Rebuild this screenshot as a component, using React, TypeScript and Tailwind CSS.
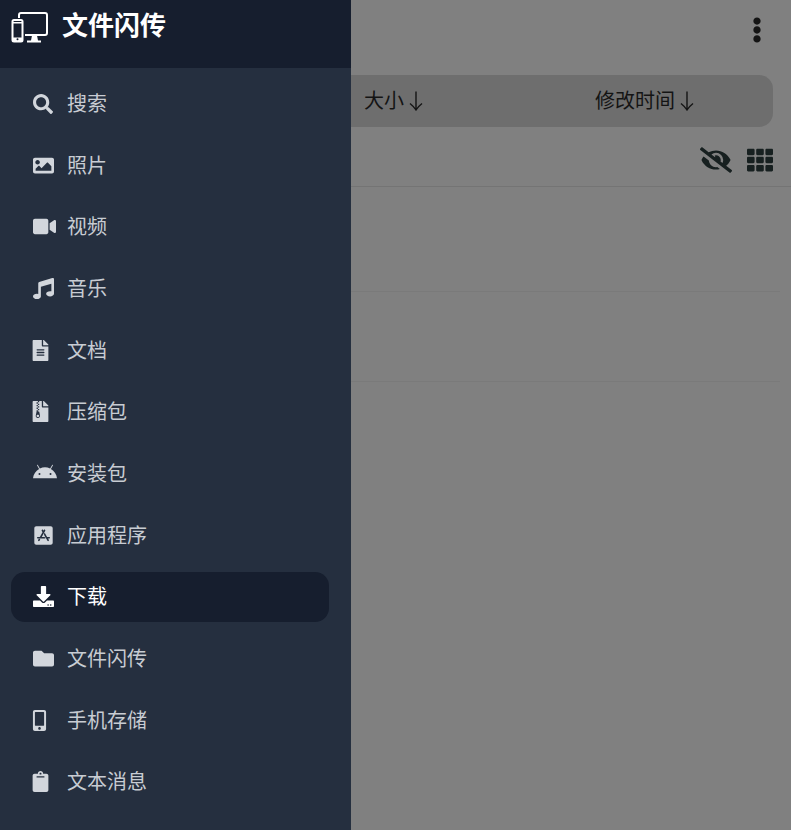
import React from "react";
import {
  FaSearch,
  FaImage,
  FaVideo,
  FaMusic,
  FaFileAlt,
  FaFileArchive,
  FaDownload,
  FaFolder,
  FaMobileAlt,
  FaClipboard,
  FaEllipsisV,
  FaEyeSlash,
  FaTh,
  FaAppStoreIos,
} from "react-icons/fa";
import { FaAndroid } from "react-icons/fa6";

const items: { label: string; icon: React.ReactNode; active?: boolean }[] = [
  { label: "搜索", icon: <FaSearch size={20} /> },
  { label: "照片", icon: <FaImage size={21} /> },
  { label: "视频", icon: <FaVideo size={23} /> },
  { label: "音乐", icon: <FaMusic size={21} /> },
  { label: "文档", icon: <FaFileAlt size={21} className="-ml-[2.6px]" /> },
  { label: "压缩包", icon: <FaFileArchive size={21} className="-ml-[2.6px]" /> },
  { label: "安装包", icon: <FaAndroid size={24} /> },
  { label: "应用程序", icon: <FaAppStoreIos size={21} /> },
  { label: "下载", icon: <FaDownload size={21} />, active: true },
  { label: "文件闪传", icon: <FaFolder size={21} /> },
  { label: "手机存储", icon: <FaMobileAlt size={21} className="-ml-[4px]" /> },
  { label: "文本消息", icon: <FaClipboard size={21} className="-ml-[2.6px]" /> },
];

function DevicesIcon() {
  return (
    <svg width="38" height="31" viewBox="0 0 38 31" fill="none">
      <path d="M8 6V3a2 2 0 0 1 2-2h24a2 2 0 0 1 2 2v18a2 2 0 0 1-2 2H14" stroke="#fff" strokeWidth="2" />
      <rect x="1.5" y="8" width="10" height="21.5" rx="1.5" stroke="#fff" strokeWidth="2" fill="#161e2e" />
      <rect x="1" y="10" width="11" height="1.5" fill="#fff" />
      <rect x="1" y="25.5" width="11" height="3.5" fill="#fff" />
      <circle cx="6.5" cy="27.3" r="1" fill="#161e2e" />
      <path d="M16 28.5h4l1-5h5l1 5h3V30.5H16z" fill="#fff" />
    </svg>
  );
}

function ArrowDown() {
  return (
    <svg width="14" height="20" viewBox="0 0 14 20" fill="none" className="ml-[5px] mt-[2px]">
      <path d="M7 0.5V19M1 12.5C3.5 14.5 5.5 16.5 7 19C8.5 16.5 10.5 14.5 13 12.5" stroke="#141414" strokeWidth="1.4" />
    </svg>
  );
}

function Sort({ label, className }: { label: string; className?: string }) {
  return (
    <span className={`-mt-[2px] flex items-center ${className ?? ""}`}>
      {label}
      <ArrowDown />
    </span>
  );
}

export default function App() {
  return (
    <div
      className="flex h-[830px] w-[791px] overflow-hidden bg-[#808080]"
      style={{ fontFamily: '"Noto Sans CJK SC", sans-serif' }}
    >
      <aside className="flex w-[351px] shrink-0 flex-col bg-[#252f3f]">
        <header className="flex h-[68px] items-start gap-[14px] bg-[#161e2e] pl-[11px] pt-[12px]">
          <DevicesIcon />
          <h1 className="-ml-[1px] -mt-[3px] text-[26px] leading-[30px] font-bold text-white">文件闪传</h1>
        </header>
        <nav className="flex flex-col gap-[11.67px] pl-[11px] pr-[22px] pt-[10.5px]">
          {items.map((it) => (
            <a
              key={it.label}
              className={`flex h-[50px] items-center rounded-[14px] pl-[22px] text-[20px] ${
                it.active ? "bg-[#161e2e] text-white" : "text-[#c8ccd3]"
              }`}
            >
              <span
                className={`flex w-[34px] shrink-0 items-center ${
                  it.active ? "text-white" : "text-[#d2d6dc]"
                }`}
              >
                {it.icon}
              </span>
              <span className="-mt-[1px]">{it.label}</span>
            </a>
          ))}
        </nav>
      </aside>
      <main className="flex min-w-0 flex-1 flex-col text-[#141414]">
        <div className="flex h-[75px] shrink-0 items-start justify-end pr-[21px] pt-[17px]">
          <FaEllipsisV size={26} className="text-[#141414]" />
        </div>
        <div className="mr-[18px] flex h-[52px] shrink-0 items-center rounded-r-[14px] bg-[#6e6e6e] pl-[13px] text-[20px]">
          <Sort label="大小" className="w-[231px]" />
          <Sort label="修改时间" />
        </div>
        <div className="flex h-[60px] shrink-0 items-center justify-end gap-[15px] border-b border-[#747474] pr-[18px] pt-[6px]">
          <FaEyeSlash size={32} className="text-[#172020]" />
          <FaTh size={26} className="text-[#172020]" />
        </div>
        <div className="mr-[11px] h-[105px] shrink-0 border-b border-[#7a7a7a]" />
        <div className="mr-[11px] h-[90px] shrink-0 border-b border-[#7a7a7a]" />
      </main>
    </div>
  );
}
